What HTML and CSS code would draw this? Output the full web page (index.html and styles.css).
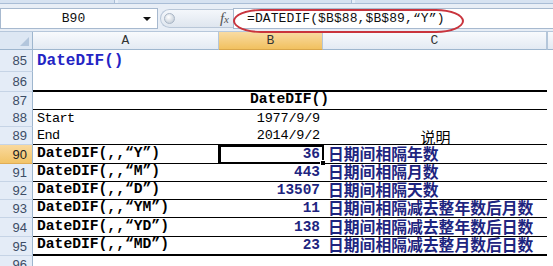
FILE: index.html
```html
<!DOCTYPE html>
<html>
<head>
<meta charset="utf-8">
<link rel="stylesheet" href="styles.css">
</head>
<body>
<div class="ribbon-edge"><span class="tab t1"></span><span class="tab t2"></span><span class="tab t3"></span></div>
<div class="fbar">
  <div class="namebox"><span class="name">B90</span><span class="caret"></span></div>
  <div class="grip"><span class="knob"></span><span class="fx">f<i>x</i></span></div>
  <div class="formula"><span>=DATEDIF($B$88,$B$89,“Y”)</span></div>
  <div class="ring"></div>
</div>
<div class="sheet">
  <div class="row hdr">
    <div class="corner"><span class="tri"></span></div>
    <div class="ch">A</div>
    <div class="ch sel">B</div>
    <div class="ch">C</div>
    <div class="ch last"></div>
  </div>
  <div class="row r85">
    <div class="rh">85</div>
    <div class="c title">DateDIF()</div>
    <div class="c"></div><div class="c"></div><div class="c"></div>
  </div>
  <div class="row r86">
    <div class="rh">86</div>
    <div class="c thick"></div><div class="c thick"></div><div class="c thick"></div><div class="c"></div>
  </div>
  <div class="row r87">
    <div class="rh">87</div>
    <div class="c line"></div>
    <div class="c line b head">DateDIF()</div>
    <div class="c line"></div><div class="c"></div>
  </div>
  <div class="row">
    <div class="rh">88</div>
    <div class="c reg">Start</div>
    <div class="c num date">1977/9/9</div>
    <div class="c"></div><div class="c"></div>
  </div>
  <div class="row">
    <div class="rh">89</div>
    <div class="c line reg">End</div>
    <div class="c line num date">2014/9/2</div>
    <div class="c line center cjk">说明</div><div class="c"></div>
  </div>
  <div class="row r90">
    <div class="rh active">90</div>
    <div class="c line b">DateDIF(,,“Y”)</div>
    <div class="c line num val selected">36<span class="selbox"></span><span class="handle"></span></div>
    <div class="c line desc">日期间相隔年数</div><div class="c"></div>
  </div>
  <div class="row">
    <div class="rh">91</div>
    <div class="c line b">DateDIF(,,“M”)</div>
    <div class="c line num val">443</div>
    <div class="c line desc">日期间相隔月数</div><div class="c"></div>
  </div>
  <div class="row">
    <div class="rh">92</div>
    <div class="c line b">DateDIF(,,“D”)</div>
    <div class="c line num val">13507</div>
    <div class="c line desc">日期间相隔天数</div><div class="c"></div>
  </div>
  <div class="row">
    <div class="rh">93</div>
    <div class="c line b">DateDIF(,,“YM”)</div>
    <div class="c line num val">11</div>
    <div class="c line desc">日期间相隔减去整年数后月数</div><div class="c"></div>
  </div>
  <div class="row r94">
    <div class="rh">94</div>
    <div class="c line b">DateDIF(,,“YD”)</div>
    <div class="c line num val">138</div>
    <div class="c line desc">日期间相隔减去整年数后日数</div><div class="c"></div>
  </div>
  <div class="row r95">
    <div class="rh">95</div>
    <div class="c thick b">DateDIF(,,“MD”)</div>
    <div class="c thick num val">23</div>
    <div class="c thick desc">日期间相隔减去整月数后日数</div><div class="c"></div>
  </div>
  <div class="row">
    <div class="rh">96</div>
    <div class="c"></div><div class="c"></div><div class="c"></div><div class="c"></div>
  </div>
</div>
</body>
</html>
```

FILE: styles.css
```css
* { box-sizing: border-box; margin: 0; padding: 0; }
html, body { width: 553px; height: 266px; overflow: hidden; background: #fff; }
body { font-family: "Liberation Mono", monospace; color: #000; }

.ribbon-edge {
  height: 4px; background: #e6eef8; border-bottom: 1px solid #a9bdd6;
  display: flex; gap: 3px;
}
.tab { height: 3px; background: #d6e2f1; border-right: 1px solid #a9bdd6; }
.t1 { width: 115px; }
.t2 { width: 234px; }
.t3 { flex: 1; border-right: none; }

.fbar {
  position: relative; height: 28px; background: #e8eef6;
  display: flex; align-items: flex-start; padding-top: 4px;
  border-bottom: 1px solid #b6c7db;
}
.namebox {
  width: 158px; height: 21px; background: #fff; border: 1px solid #a7b9cf;
  display: flex; align-items: center;
}
.name { flex: 1; text-align: center; font-size: 13px; color: #111; padding-left: 3px; }
.caret {
  width: 0; height: 0; margin-right: 6px;
  border-left: 4px solid transparent; border-right: 4px solid transparent;
  border-top: 4px solid #111;
}
.grip {
  width: 73px; height: 19px; margin: 1px 0 0 2px;
  display: flex; align-items: center; justify-content: space-between;
  background: linear-gradient(#f4f7fb, #dfe6ef);
  border: 1px solid #b9c7d8; border-right: none;
  border-radius: 10px 0 0 10px;
}
.knob {
  width: 11px; height: 11px; margin-left: 3px; border-radius: 50%;
  background: radial-gradient(circle at 40% 35%, #ffffff, #b8c3d0);
  border: 1px solid #a9b6c6;
}
.fx { font-family: "Liberation Serif", serif; font-style: italic; font-size: 15px; color: #555; margin-right: 4px; }
.fx i { font-size: 11px; }
.formula {
  flex: 1; height: 21px; background: #fff; border: 1px solid #a7b9cf; border-right: none;
  display: flex; align-items: center; padding-left: 13px;
  font-size: 13px; letter-spacing: 0.1px; white-space: nowrap; color: #111;
}
.ring {
  position: absolute; left: 233px; top: 5px; width: 231px; height: 24px;
  border: 2px solid #c9343d; border-radius: 28px / 12px;
}

.row {
  display: grid; grid-template-columns: 33px 186px 104px 224px 1fr;
  height: 18px;
}
.hdr { height: 18px; }
.corner {
  background: #dde7f3; border-right: 1px solid #9eb6ce; border-bottom: 1px solid #9eb6ce;
  display: flex; align-items: flex-end; justify-content: flex-end; padding: 0 3px 3px 0;
}
.tri {
  width: 0; height: 0;
  border-left: 9px solid transparent; border-bottom: 9px solid #b3c6dc;
}
.ch {
  background: linear-gradient(#f8fafd, #e3eaf3);
  border-right: 1px solid #b4c6da; border-bottom: 1px solid #9eb6ce;
  display: flex; align-items: center; justify-content: center;
  font-size: 13px; color: #333;
}
.ch.sel { background: linear-gradient(#f9dba3, #f1c15f); border-bottom-color: #d9a64a; }
.ch.last { border-right: none; border-left: 1px solid #b4c6da; }

.rh {
  background: #e4ecf7; border-right: 1px solid #9eb6ce; border-bottom: 1px solid #c6d4e6;
  display: flex; align-items: center; justify-content: flex-end; padding-right: 5px;
  font-family: "Liberation Sans", sans-serif; font-size: 13px; color: #3d4d66;
}
.rh.active { background: linear-gradient(#f9d99e, #f2c468); border-bottom-color: #e0ad55; color: #222; }

.r85 { height: 22px; }
.r86 { height: 20px; }
.r87 { height: 17px; }
.r90 { height: 19px; }
.r94 { height: 19px; }
.r95 { height: 19px; }

.c {
  display: flex; align-items: flex-end; padding: 0 3px 2px 4px;
  white-space: nowrap; line-height: 1; position: relative;
}
.line { border-bottom: 1px solid #000; }
.thick { border-bottom: 2px solid #000; }

.title { font-weight: bold; font-size: 16px; color: #2424c4; padding-bottom: 3px; }
.b { font-weight: bold; font-size: 14.67px; }
.head { padding-left: 31px; overflow: visible; }
.reg { font-size: 13.5px; letter-spacing: -0.6px; }
.num { justify-content: flex-end; padding-right: 3px; }
.date { font-size: 13.5px; letter-spacing: -0.2px; }
.val { font-weight: bold; font-size: 14.4px; color: #1e2580; }
.center { justify-content: center; }
.cjk { font-family: "Noto Sans CJK SC", sans-serif; font-size: 15px; padding-bottom: 0; }
.desc {
  font-family: "Noto Sans CJK SC", sans-serif; font-weight: bold; font-size: 15.8px;
  color: #1e2580; padding-left: 5px; padding-bottom: 1px;
}

.selbox {
  position: absolute; left: -1px; top: 0; right: -1px; bottom: -1px;
  border: 2px solid #000; border-left-width: 3px;
}
.handle {
  position: absolute; right: -3px; bottom: -3px; width: 6px; height: 6px;
  background: #000; border: 1px solid #fff;
}
```
